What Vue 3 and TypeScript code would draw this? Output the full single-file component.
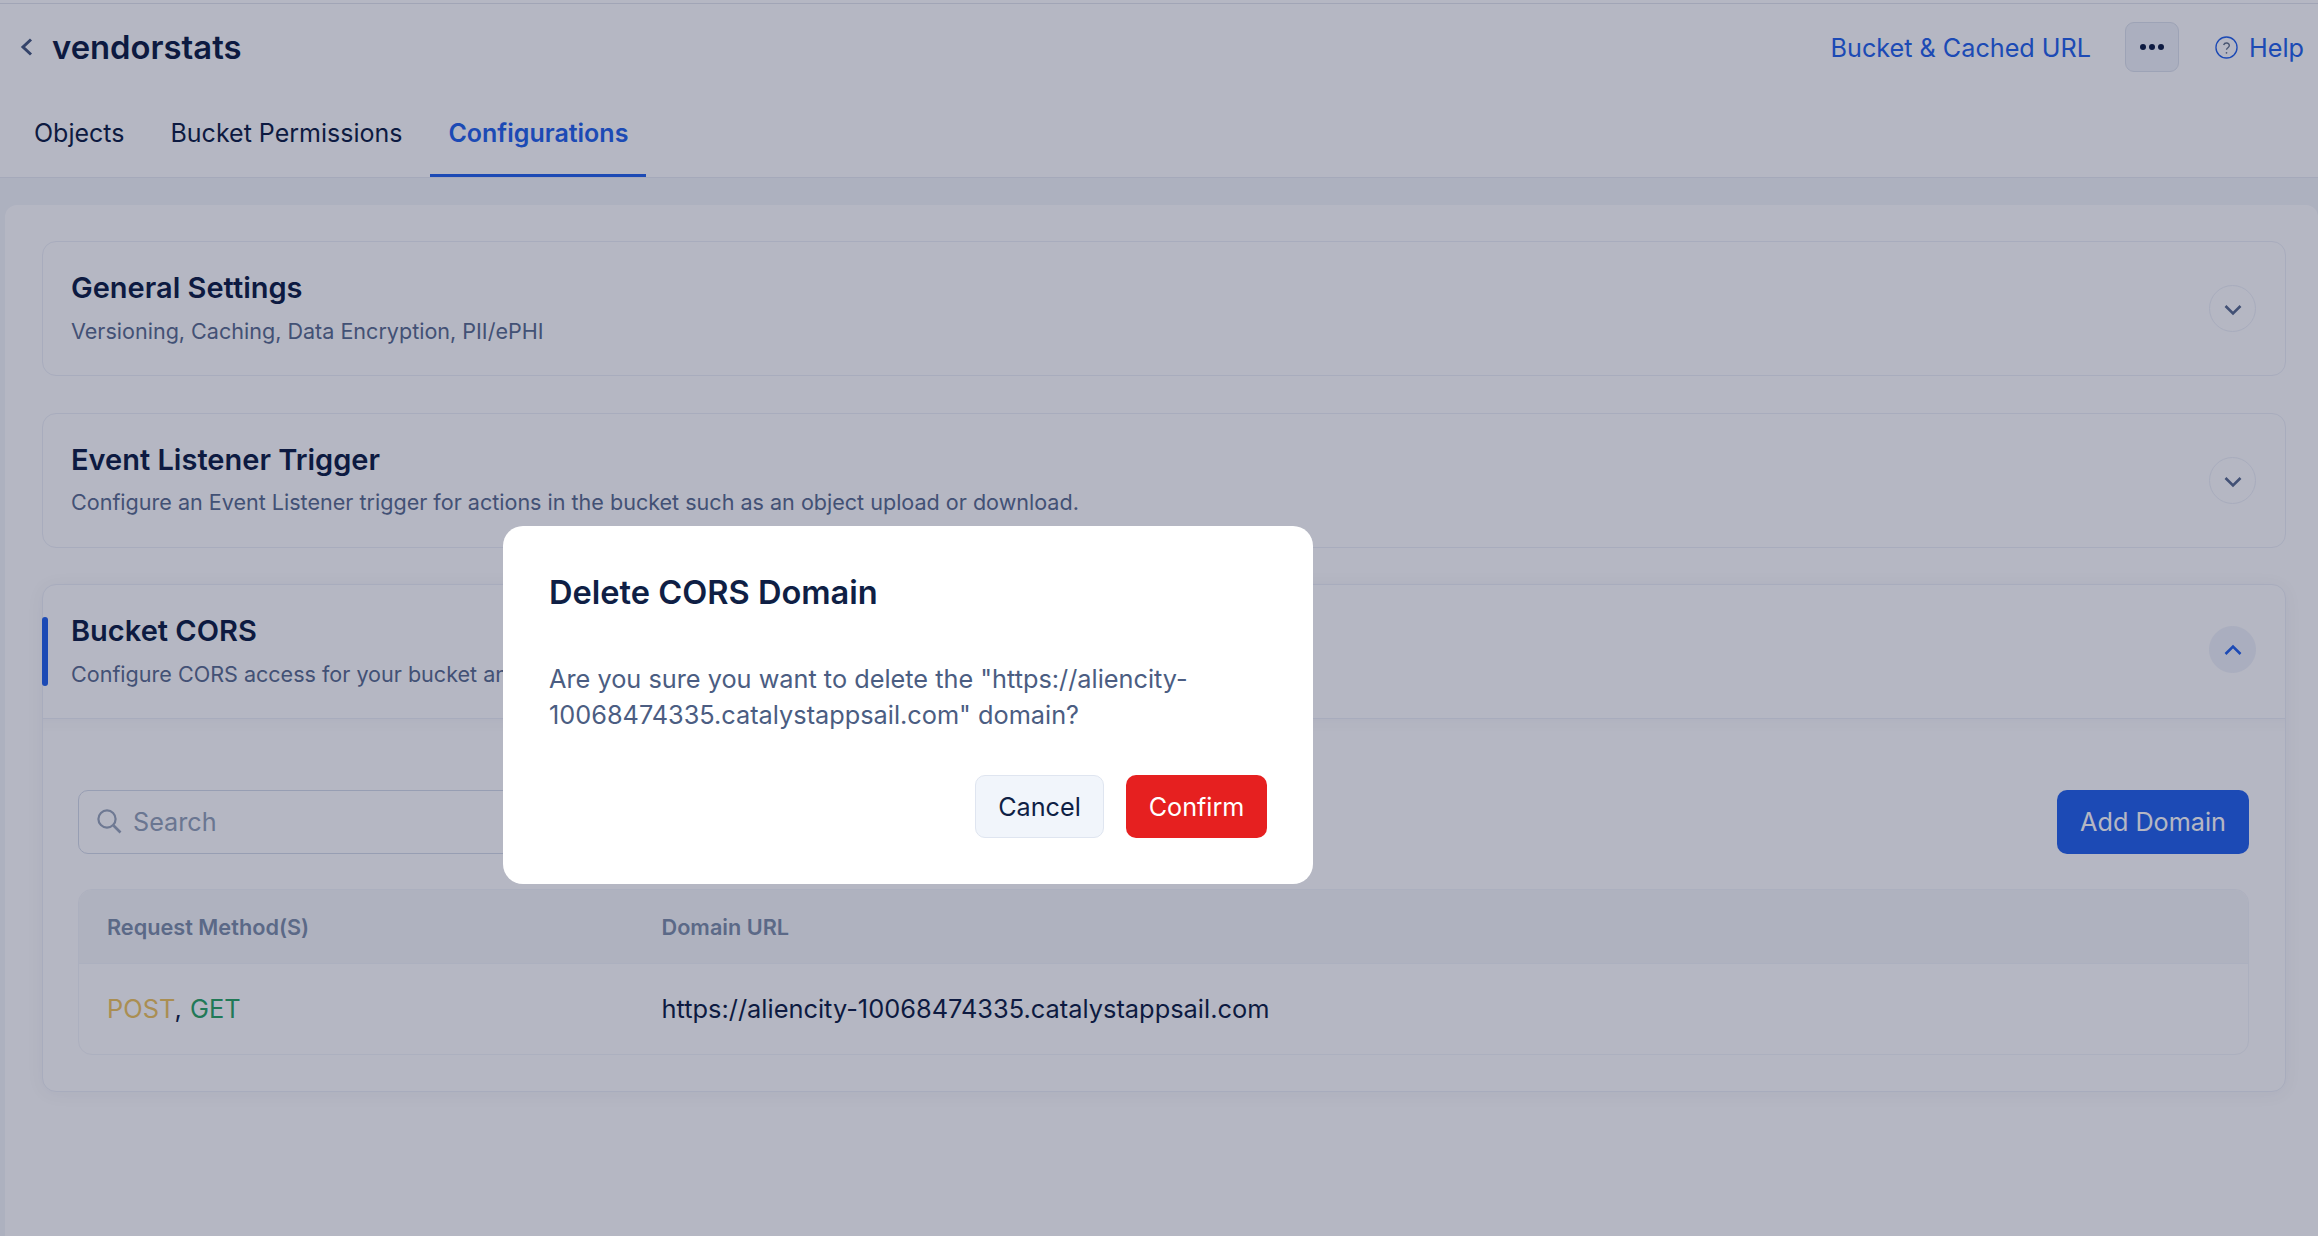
<script setup lang="ts">
interface Section {
  title: string
  desc: string
}

const tabs = ['Objects', 'Bucket Permissions', 'Configurations']
const activeTab = 'Configurations'

const sections: Section[] = [
  { title: 'General Settings', desc: 'Versioning, Caching, Data Encryption, PII/ePHI' },
  {
    title: 'Event Listener Trigger',
    desc: 'Configure an Event Listener trigger for actions in the bucket such as an object upload or download.',
  },
]

const domainUrl = 'https://aliencity-10068474335.catalystappsail.com'
</script>

<template>
  <div class="page">
    <div class="top-strip" />

    <header class="header">
      <div class="title-row">
        <div class="title-left">
          <svg class="back-icon" viewBox="0 0 14 18" fill="none">
            <path d="M12 1.5 4 9l8 7.5" stroke="currentColor" stroke-width="3" />
          </svg>
          <h1 class="bucket-name">vendorstats</h1>
        </div>
        <div class="title-right">
          <a class="link">Bucket &amp; Cached URL</a>
          <button class="more-btn">
            <span class="dot" /><span class="dot" /><span class="dot" />
          </button>
          <a class="help">
            <svg class="help-icon" viewBox="0 0 24 24" fill="none">
              <circle cx="12" cy="12" r="11" stroke="currentColor" stroke-width="1.4" />
              <path d="M9 9.4a3.1 3.1 0 0 1 6 .6c0 2-3 2.4-3 4.4" stroke="#64748b" stroke-width="1.4" />
              <circle cx="12" cy="17.6" r="0.9" fill="#64748b" />
            </svg>
            Help
          </a>
        </div>
      </div>
      <nav class="tabs">
        <div v-for="tab in tabs" :key="tab" class="tab" :class="{ 'tab--active': tab === activeTab }">
          {{ tab }}
        </div>
      </nav>
    </header>

    <main class="content">
      <div class="panel">
        <section v-for="s in sections" :key="s.title" class="card">
          <div class="card-head">
            <div>
              <h2 class="card-title">{{ s.title }}</h2>
              <p class="card-desc">{{ s.desc }}</p>
            </div>
            <span class="toggle">
              <svg viewBox="0 0 18 12" fill="none" class="chevron chevron--down">
                <path d="M1.5 2 9 9.5 16.5 2" stroke="currentColor" stroke-width="2.6" />
              </svg>
            </span>
          </div>
        </section>

        <section class="card card--open">
          <div class="card-head card-head--open">
            <span class="accent" />
            <div>
              <h2 class="card-title">Bucket CORS</h2>
              <p class="card-desc">Configure CORS access for your bucket and manage the allowed domains.</p>
            </div>
            <span class="toggle toggle--open">
              <svg viewBox="0 0 18 12" fill="none" class="chevron">
                <path d="M1.5 10 9 2.5 16.5 10" stroke="currentColor" stroke-width="2.6" />
              </svg>
            </span>
          </div>

          <div class="card-body">
            <div class="toolbar">
              <div class="search">
                <svg class="search-icon" viewBox="0 0 25 25" fill="none">
                  <circle cx="10" cy="10" r="8.6" stroke="currentColor" stroke-width="2.2" />
                  <path d="m16.5 16.5 7 7" stroke="currentColor" stroke-width="2.6" />
                </svg>
                <span class="search-text">Search</span>
              </div>
              <button class="add-btn">Add Domain</button>
            </div>

            <div class="table">
              <div class="row row--head">
                <div>Request Method(S)</div>
                <div>Domain URL</div>
              </div>
              <div class="row row--body">
                <div class="methods">
                  <span class="post">POST</span>, <span class="get">GET</span>
                </div>
                <div class="url">{{ domainUrl }}</div>
              </div>
            </div>
          </div>
        </section>
      </div>
    </main>

    <div class="backdrop">
      <div class="modal">
        <h3 class="modal-title">Delete CORS Domain</h3>
        <p class="modal-text">Are you sure you want to delete the "{{ domainUrl }}" domain?</p>
        <div class="modal-actions">
          <button class="btn-cancel">Cancel</button>
          <button class="btn-confirm">Confirm</button>
        </div>
      </div>
    </div>
  </div>
</template>

<style>
html,
body {
  margin: 0;
  background: #fff;
}
</style>

<style scoped>
.page {
  position: relative;
  width: 100vw;
  height: 100vh;
  overflow: hidden;
  background: #fff;
  font-family: Inter, "Noto Sans", sans-serif;
  color: #0f1f45;
}

.top-strip {
  height: 3px;
  border-bottom: 1px solid #e2e5ec;
}

.title-row {
  display: flex;
  align-items: center;
  justify-content: space-between;
  padding: 18px 14px 18px 19px;
}

.title-left {
  display: flex;
  align-items: center;
  gap: 19px;
}

.back-icon {
  width: 14px;
  height: 18px;
  color: #475a80;
}

.bucket-name {
  margin: 0;
  font-size: 32.8px;
  font-weight: 600;
  line-height: 40px;
}

.title-right {
  display: flex;
  align-items: center;
}

.link,
.help {
  color: #2563eb;
  font-size: 25.2px;
  line-height: 32px;
}

.link {
  padding-top: 1px;
}

.more-btn {
  width: 54px;
  height: 50px;
  margin: 0 36px 0 34px;
  display: flex;
  align-items: center;
  justify-content: center;
  gap: 3px;
  padding: 0;
  background: #f1f4f9;
  border: 1px solid #dde2ec;
  border-radius: 9px;
}

.dot {
  width: 6px;
  height: 6px;
  border-radius: 50%;
  background: #0f1f45;
}

.help {
  display: flex;
  align-items: center;
  gap: 11px;
  padding-top: 1px;
}

.help-icon {
  width: 23px;
  height: 23px;
}

.tabs {
  display: flex;
  gap: 10px;
  padding-left: 16px;
}

.tab {
  height: 82px;
  padding: 2px 18px 0;
  display: flex;
  align-items: center;
  font-size: 25px;
  line-height: 32px;
  border-bottom: 3px solid transparent;
}

.tab--active {
  color: #2563eb;
  font-weight: 600;
  border-bottom-color: #2563eb;
}

.content {
  padding: 27px 0 0 5px;
  height: 1059px;
  box-sizing: border-box;
  background: #f4f6fa;
  border-top: 1px solid #e8ebf2;
}

.panel {
  height: 100%;
  box-sizing: border-box;
  padding: 36px 32px 0 37px;
  background: #fff;
  border-radius: 12px 12px 0 0;
  display: flex;
  flex-direction: column;
  gap: 36.5px;
}

.card {
  background: #fff;
  border: 1px solid #edf0f7;
  border-radius: 14px;
}

.card--open {
  box-shadow: 0 2px 18px rgba(15, 31, 69, 0.05);
}

.card-head {
  position: relative;
  height: 133px;
  box-sizing: border-box;
  padding: 28px 21px 0 28px;
  display: flex;
  justify-content: space-between;
}

.card-head--open {
  height: 134px;
  border-bottom: 1px solid #edf0f7;
}

.accent {
  position: absolute;
  left: -1px;
  top: 32px;
  width: 6px;
  height: 69px;
  background: #2563eb;
  border-radius: 3px;
}

.card-title {
  margin: 0;
  font-size: 29px;
  line-height: 36px;
  font-weight: 600;
}

.card-desc {
  margin: 9.5px 0 0;
  font-size: 21.55px;
  line-height: 30px;
  color: #5b6d90;
}

.toggle {
  width: 47px;
  height: 47px;
  box-sizing: border-box;
  margin: 15px 8px 0 0;
  flex: none;
  display: flex;
  align-items: center;
  justify-content: center;
  border: 1px solid #edf0f7;
  border-radius: 50%;
  color: #5b6d90;
}

.toggle--open {
  margin-top: 13px;
  background: #f0f3fa;
  border-color: #f0f3fa;
  color: #2563eb;
}

.chevron {
  width: 18px;
  height: 12px;
}

.chevron--down {
  margin-top: 3px;
}

.card-body {
  padding: 71px 36px 36px 35px;
  box-shadow: inset 0 18px 16px -16px rgba(15, 31, 69, 0.04);
}

.toolbar {
  display: flex;
  justify-content: space-between;
  margin-bottom: 35px;
}

.search {
  width: 560px;
  height: 64px;
  box-sizing: border-box;
  padding-left: 18px;
  display: flex;
  align-items: center;
  gap: 11px;
  border: 1px solid #d5dbe8;
  border-radius: 10px;
}

.search-icon {
  width: 25px;
  height: 25px;
  margin-top: -2px;
  color: #9aa6ba;
}

.search-text {
  color: #94a3b8;
  font-size: 25.2px;
}

.add-btn {
  width: 192px;
  height: 64px;
  padding: 0;
  background: #2563eb;
  border: 0;
  border-radius: 10px;
  color: #fff;
  font-family: inherit;
  font-size: 25.2px;
}

.table {
  border: 1px solid #f3f5f9;
  border-radius: 14px;
  overflow: hidden;
}

.row {
  display: grid;
  grid-template-columns: 554.5px 1fr;
  align-items: center;
  padding-left: 28px;
  font-size: 25.4px;
}

.row--body {
  height: 88px;
  padding-bottom: 2px;
}

.row--head {
  height: 73px;
  background: #f7f8fa;
  border-bottom: 1px solid #f3f5f9;
  color: #7f90aa;
  font-size: 21.7px;
  font-weight: 600;
}

.post {
  color: #efc55e;
}

.get {
  color: #2ba765;
  margin-left: 1px;
}

.backdrop {
  position: absolute;
  inset: 0;
  padding: 174px 502px 0 0;
  display: flex;
  align-items: center;
  justify-content: center;
  background: rgba(10, 18, 55, 0.3);
}

.modal {
  width: 810px;
  height: 358px;
  box-sizing: border-box;
  padding: 45px 46px 46px 46px;
  display: flex;
  flex-direction: column;
  background: #fff;
  border-radius: 20px;
}

.modal-title {
  margin: 0;
  font-size: 32.6px;
  line-height: 42px;
  font-weight: 600;
}

.modal-text {
  margin: 48px 0 0;
  font-size: 25.3px;
  line-height: 36px;
  color: #4b5d82;
}

.modal-actions {
  margin-top: auto;
  display: flex;
  justify-content: flex-end;
  gap: 22px;
}

.modal-actions button {
  height: 63px;
  padding: 0;
  border-radius: 10px;
  font-family: inherit;
  font-size: 25.2px;
}

.btn-cancel {
  width: 129px;
  background: #f1f5fb;
  border: 1px solid #dfe5f0;
  color: #0f1f45;
}

.btn-confirm {
  width: 141px;
  background: #e62020;
  border: 0;
  color: #fff;
}
</style>
